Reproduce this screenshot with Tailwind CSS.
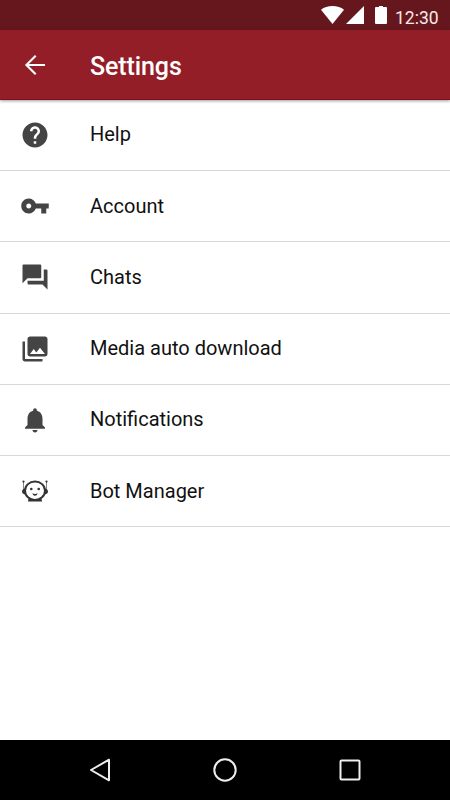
<!DOCTYPE html>
<html lang="en">
<head>
    <meta charset="UTF-8">
    <meta name="viewport" content="width=device-width, initial-scale=1.0">
    <title>Settings</title>
    <script src="https://cdn.jsdelivr.net/npm/@tailwindcss/browser@4"></script>
</head>
<body class="bg-white font-['Roboto',sans-serif] text-[#111111]">
    <div class="flex flex-col w-[450px] h-[800px] overflow-hidden">
        <!-- Status bar -->
        <div class="flex shrink-0 h-[30px] bg-[#66171d] pl-[321px] pt-[6px] text-white">
            <svg class="w-[23px] h-[18px]" viewBox="0 0 23 18" fill="currentColor"><path d="M11.5 18 0 3.7C3 1.300 7 0 11.500 0S20 1.300 23 3.700z"/></svg>
            <svg class="w-[18px] h-[18px] ml-[2px]" viewBox="0 0 18 18" fill="currentColor"><path d="M0 18 18 0v18z"/></svg>
            <svg class="w-[12px] h-[18px] ml-[11px]" viewBox="0 0 12 18" fill="currentColor"><path d="M4 0h4v1h3q1 0 1 1V17q0 1-1 1H1q-1 0-1-1V2q0-1 1-1h3z"/></svg>
            <span class="ml-[8px] mt-[2px] text-[17.5px] leading-[20px] text-[#fbe9e7]">12:30</span>
        </div>

        <!-- Toolbar -->
        <header class="relative flex shrink-0 items-center h-[70px] bg-[#931e27] border-b border-[#7d1019] pl-5 text-white shadow-[0_1px_3px_rgba(0,0,0,0.4)]">
            <svg class="w-[30px] h-[30px] mt-px" viewBox="0 0 30 30" fill="none" stroke="currentColor" stroke-width="2.1"><path d="M25 15H7M15.700 5.700 6.400 15l9.300 9.300"/></svg>
            <h1 class="ml-10 mt-[4px] text-[25px] leading-[30px] font-medium tracking-[-0.1px]">Settings</h1>
        </header>

        <!-- Menu -->
        <ul class="flex-1 text-[20px]">
            <li class="flex items-center h-[71.2px] pl-5 border-b border-[#d8d8d8]">
                <svg class="w-[30px] h-[30px] text-[#444444]" viewBox="0 0 24 24" fill="currentColor"><path d="M12 2C6.480 2 2 6.480 2 12s4.480 10 10 10 10-4.480 10-10S17.520 2 12 2zm1 17h-2v-2h2v2zm2.070-7.750l-.9.920C13.450 12.900 13 13.500 13 15h-2v-.5c0-1.100.45-2.100 1.170-2.830l1.240-1.260c.37-.36.59-.86.59-1.410 0-1.100-.9-2-2-2s-2 .9-2 2H8c0-2.210 1.790-4 4-4s4 1.790 4 4c0 .88-.36 1.680-.93 2.250z"/></svg>
                <span class="ml-10 mb-[2px]">Help</span>
            </li>
            <li class="flex items-center h-[71.2px] pl-5 border-b border-[#d8d8d8]">
                <svg class="w-[30px] h-[30px] text-[#444444]" viewBox="0 0 24 24" fill="currentColor"><path d="M12.650 10C11.830 7.670 9.610 6 7 6c-3.310 0-6 2.690-6 6s2.690 6 6 6c2.610 0 4.830-1.670 5.650-4H17v4h4v-4h2v-4H12.650zM7 14c-1.100 0-2-.9-2-2s.9-2 2-2 2 .9 2 2-.9 2-2 2z"/></svg>
                <span class="ml-10 mb-[1px]">Account</span>
            </li>
            <li class="flex items-center h-[71.2px] pl-5 border-b border-[#d8d8d8]">
                <svg class="w-[30px] h-[30px] text-[#444444]" viewBox="0 0 24 24" fill="currentColor"><path d="M21 6h-2v9H6v2c0 .55.45 1 1 1h11l4 4V7c0-.55-.45-1-1-1zm-4 6V3c0-.55-.45-1-1-1H3c-.55 0-1 .45-1 1v14l4-4h10c.55 0 1-.45 1-1z"/></svg>
                <span class="ml-10 mb-[1px]">Chats</span>
            </li>
            <li class="flex items-center h-[71.2px] pl-5 border-b border-[#d8d8d8]">
                <svg class="w-[30px] h-[30px] text-[#444444]" viewBox="0 0 24 24" fill="currentColor"><path d="M22 16V4c0-1.100-.9-2-2-2H8c-1.100 0-2 .9-2 2v12c0 1.100.9 2 2 2h12c1.100 0 2-.9 2-2zm-11-4l2.030 2.710L16 11l4 5H8l3-4zM2 6v14c0 1.100.9 2 2 2h14v-2H4V6H2z"/></svg>
                <span class="ml-10 mb-[1px]">Media auto download</span>
            </li>
            <li class="flex items-center h-[71.2px] pl-5 border-b border-[#d8d8d8]">
                <svg class="w-[30px] h-[30px] text-[#444444]" viewBox="0 0 24 24" fill="currentColor"><path d="M12 22c1.100 0 2-.9 2-2h-4c0 1.100.89 2 2 2zm6-6v-5c0-3.070-1.640-5.640-4.500-6.320V4c0-.83-.67-1.500-1.500-1.500s-1.500.67-1.500 1.500v.68C7.630 5.360 6 7.920 6 11v5l-2 2v1h16v-1l-2-2z"/></svg>
                <span class="ml-10 mb-[1px]">Notifications</span>
            </li>
            <li class="flex items-center h-[71.2px] pl-5 border-b border-[#d8d8d8]">
                <svg class="w-[30px] h-[30px] text-[#333333]" viewBox="0 0 30 30" fill="currentColor">
                    <path d="M9.500 21.500h11q1.500 1 1.500 4H8q0-3 1.500-4z"/>
                    <path d="M5.200 12.500v6Q2 17.800 2 15.500t3.200-3zM24.800 12.500v6q3.200-.7 3.200-3t-3.200-3z"/>
                    <path d="M3.500 5.500V14M26.500 5.500V14" fill="none" stroke="currentColor" stroke-width=".6"/>
                    <circle cx="3.500" cy="5.600" r="1.100"/>
                    <circle cx="26.500" cy="5.600" r="1.100"/>
                    <ellipse cx="15" cy="14.700" rx="10" ry="9.300" fill="#ffffff" stroke="currentColor" stroke-width="2"/>
                    <circle cx="11.300" cy="13" r="1.300"/>
                    <circle cx="18.700" cy="13" r="1.300"/>
                    <path d="M12.300 17.300q2.700 1.200 5.400 0-.7 2.500-2.700 2.500t-2.700-2.500z"/>
                </svg>
                <span class="ml-10 mb-[1px]">Bot Manager</span>
            </li>
        </ul>

        <!-- Navigation bar -->
        <nav class="flex shrink-0 items-center justify-center gap-[95px] h-[60px] bg-black text-[#eeeeee]">
            <svg class="w-[30px] h-[30px]" viewBox="0 0 30 30" fill="none" stroke="currentColor" stroke-width="2" stroke-linejoin="round"><path d="M24 4.700v20.600L6 15z"/></svg>
            <svg class="w-[30px] h-[30px]" viewBox="0 0 30 30" fill="none" stroke="currentColor" stroke-width="2"><circle cx="15" cy="15" r="10.700"/></svg>
            <svg class="w-[30px] h-[30px]" viewBox="0 0 30 30" fill="none" stroke="currentColor" stroke-width="2"><rect x="5.500" y="5.500" width="19" height="19" rx="1"/></svg>
        </nav>
    </div>
</body>
</html>
